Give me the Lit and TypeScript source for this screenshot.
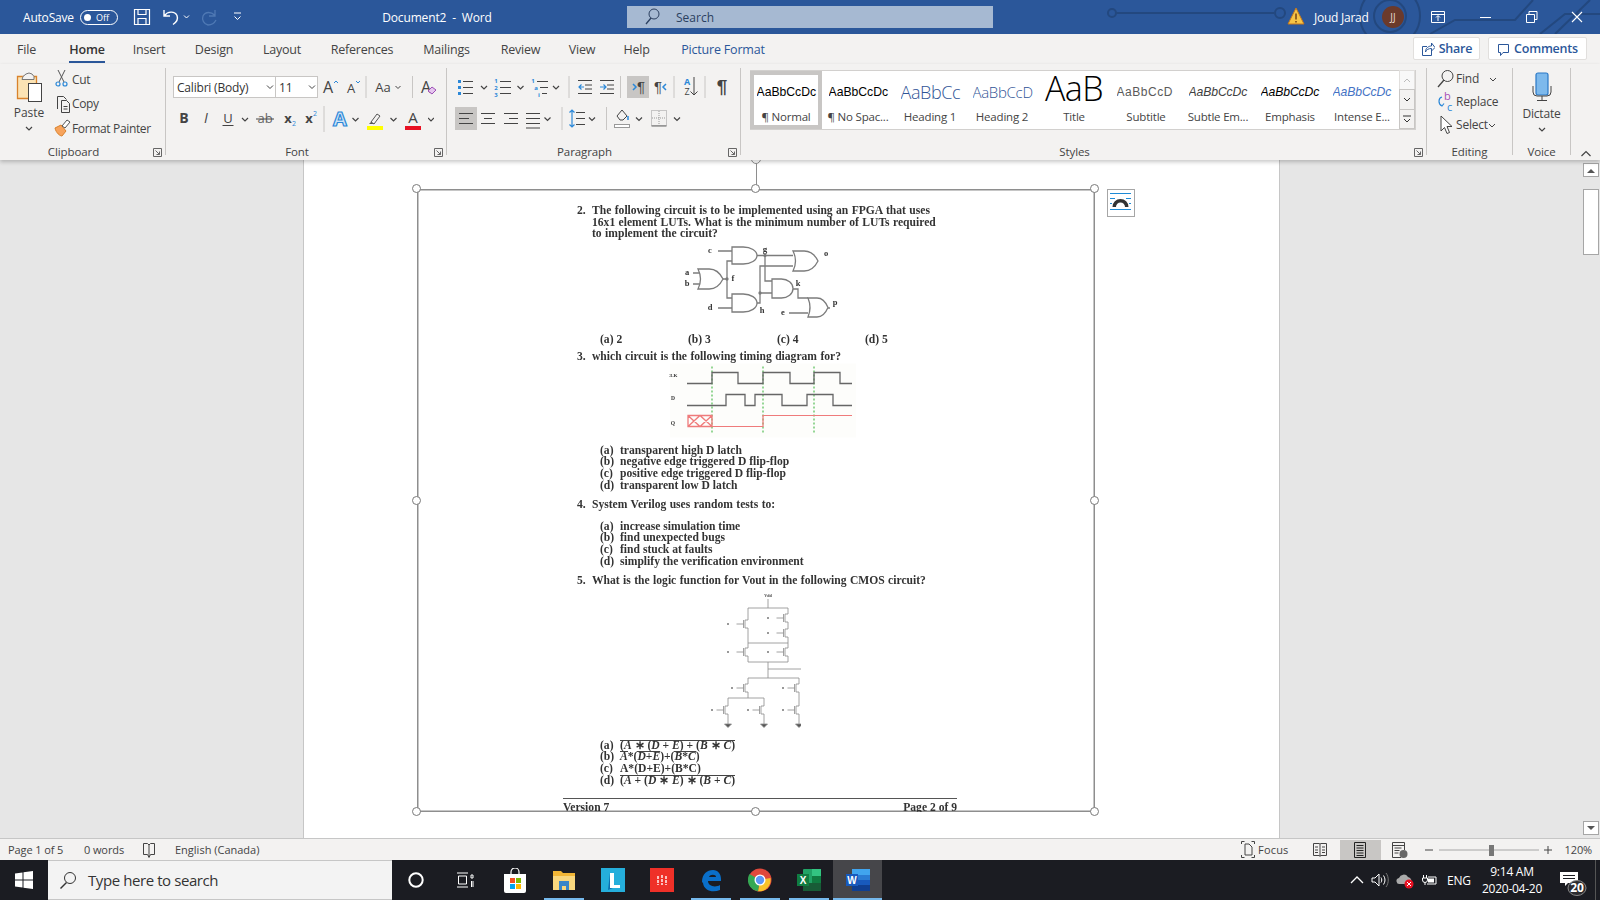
import { LitElement, html, svg, css } from "lit";
import { customElement } from "lit/decorators.js";

// icon cell: w wide, content drawn in its own coordinates
const ic = (w: number, inner: unknown = "", h = 22) =>
  html`<svg class="ic" width=${w} height=${h} viewBox="0 0 ${w} ${h}">${inner}</svg>`;
const gap = (w: number, h = 22) => ic(w, "", h);
const chev = (w: number, h = 22) =>
  ic(w, svg`<path d="M${w / 2 - 3} ${h / 2 - 1}l3 3 3-3" fill="none" stroke="#444" stroke-width="1.2"/>`, h);
const sep = (w: number, h = 22) =>
  ic(w, svg`<line x1=${w / 2} x2=${w / 2} y1="0" y2=${h} stroke="#c8c6c4"/>`, h);
const lines = (x1: number, x2: number, ys: number[], col = "#444") =>
  svg`${ys.map((y) => svg`<line x1=${x1} x2=${x2} y1=${y} y2=${y} stroke=${col} stroke-width="1"/>`)}`;
const hl = (w: number, h = 22) => svg`<rect width=${w} height=${h} fill="#c8c6c4"/>`;
const BLUE = "#2b88d8";

const launcher = html`<svg class="launch" width="9" height="9" viewBox="0 0 9 9"><path d="M.5 8.5V.5h8v8zM2.500 2.500l4 4M6.500 3.500v3h-3" fill="none" stroke="#666"/></svg>`;

const TABS: [string, string?][] = [["File"], ["Home", "on"], ["Insert"], ["Design"], ["Layout"], ["References"], ["Mailings"], ["Review"], ["View"], ["Help"], ["Picture Format", "pf"]];

const STYLES: [string, string, string][] = [
  ["AaBbCcDc", "¶ Normal", "s-normal sel"],
  ["AaBbCcDc", "¶ No Spac...", "s-normal"],
  ["AaBbCc", "Heading 1", "s-h1"],
  ["AaBbCcD", "Heading 2", "s-h2"],
  ["AaB", "Title", "s-title"],
  ["AaBbCcD", "Subtitle", "s-sub"],
  ["AaBbCcDc", "Subtle Em...", "s-em s-sem"],
  ["AaBbCcDc", "Emphasis", "s-em"],
  ["AaBbCcDc", "Intense E...", "s-em s-int"],
];

const HANDLES: [number, number][] = [[0, 0], [50, 0], [100, 0], [0, 50], [100, 50], [0, 100], [50, 100], [100, 100]];

const fet = (x: number, y: number, lx: number) => svg`
  <rect x=${x - 1} y=${y - 4} width="2" height="8" fill="#fff" stroke="none"/>
  <path d="M${x} ${y - 4}h-3v8h3M${x - 4.500} ${y - 4}v8M${x - 4.500} ${y}h-7"/>
  <circle cx=${lx} cy=${y} r="1" fill="#777" stroke="none"/>`;

const gnd = (x: number, y: number) => svg`<path d="M${x - 3.500} ${y}h7l-3.500 3.500z" fill="#555"/>`;
const lbl = (x: number, y: number, t: string, s = 6) =>
  svg`<text x=${x} y=${y} font-size=${s} text-anchor="middle" fill="#333" stroke="none" font-weight="700">${t}</text>`;

const andG = (x: number, y: number, w: number, h: number) =>
  svg`<path d="M${x} ${y}h${w * 0.45}a${w * 0.55} ${h / 2} 0 0 1 0 ${h}h-${w * 0.45}z" fill="#fff"/>`;
const orG = (x: number, y: number, w: number, h: number) =>
  svg`<path d="M${x} ${y}h${w * 0.45}q${w * 0.35} 0 ${w * 0.55} ${h / 2}q-${w * 0.2} ${h / 2} -${w * 0.55} ${h / 2}h-${w * 0.45}q${w * 0.2} -${h / 2} 0 -${h}z" fill="#fff"/>`;

@customElement("app-root")
export class AppRoot extends LitElement {
  static styles = css`
    :host { display: block; height: 900px; overflow: hidden; font-family: "Open Sans", "Noto Sans", sans-serif; font-size: 12px; color: #444; }
    .app { height: 900px; display: flex; flex-direction: column; background: #f3f2f1; }
    .ic { display: block; flex: none; }

    /* title bar */
    .title { height: 34px; flex: none; background: #2b579a; color: #fff; display: flex; align-items: center; position: relative; overflow: hidden; }
    .circuit { position: absolute; left: 1090px; top: 0; }
    .title > * { flex: none; }
    .as { margin-left: 23px; width: 57px; letter-spacing: -.2px; }
    .toggle { width: 38px; height: 15px; margin-right: 15px; border: 1.5px solid #fff; border-radius: 9px; box-sizing: border-box; display: flex; align-items: center; gap: 5px; padding-left: 3px; font-size: 9px; }
    .toggle i { width: 7px; height: 7px; background: #fff; border-radius: 50%; }
    .doc-name { margin-left: 0; width: 244px; text-align: center; letter-spacing: -.15px; }
    .search { width: 366px; height: 22px; background: #a6b9d2; color: #2b3f5f; display: flex; align-items: center; box-sizing: border-box; padding-left: 16px; gap: 15px; }
    .user { margin-left: auto; display: flex; align-items: center; position: relative; }
    .user .nm { margin: 0 10px 0 9px; letter-spacing: -.25px; width: 58px; white-space: nowrap; }
    .avatar { width: 22px; height: 22px; border-radius: 50%; background: #6b3a2b; font-size: 10px; display: grid; place-items: center; color: #e8d8d0; margin-right: 27px; }

    /* tabs */
    .tabs { height: 30px; flex: none; display: flex; position: relative; }
    .tabgrid { display: grid; grid-template-columns: 53px 68px 56px 74px 62px 98px 71px 77px 46px 63px 110px; font-size: 12.500px; letter-spacing: -.2px; }
    .tab { display: flex; justify-content: center; align-items: center; }
    .tab span { padding: 0 1px; height: 100%; display: flex; align-items: center; box-sizing: border-box; }
    .tab.on span { border-bottom: 2px solid #2b579a; border-top: 2px solid transparent; color: #333; font-weight: 600; height: 28px; padding: 0; }
    .tab.pf { color: #2b579a; }
    .actions { margin-left: auto; margin-right: 13px; display: flex; gap: 8px; padding-top: 3px; height: 23px; }
    .btn { background: #fff; border: 1px solid #e1dfdd; border-radius: 2px; color: #2b579a; display: flex; align-items: center; justify-content: center; gap: 4px; box-sizing: border-box; font-weight: 600; font-size: 12.500px; letter-spacing: -.2px; }
    .share { width: 67px; }
    .comments { width: 99px; }

    /* ribbon */
    .ribbon { height: 96px; flex: none; display: flex; position: relative; z-index: 3; box-shadow: 0 2px 4px rgba(0,0,0,.22); background: #f3f2f1; }
    .group { height: 87px; margin-top: 4px; flex: none; box-sizing: border-box; border-right: 1px solid #c8c6c4; display: flex; flex-direction: column; position: relative; }
    .gbody { flex: 1; min-height: 0; }
    .glabel { height: 16px; margin-bottom: -5px; text-align: center; line-height: 16px; font-size: 11.500px; letter-spacing: -.1px; color: #444; }
    .lp { padding-right: 18px; }
    .launch { position: absolute; right: 3px; bottom: -2px; }
    .g1 { width: 166px; }
    .g2 { width: 281px; }
    .g3 { width: 294px; }
    .g4 { width: 686px; }
    .g5 { width: 86px; }
    .g6 { width: 58px; }
    .g7 { flex: 1; display: flex; justify-content: center; align-items: flex-end; }
    .clip { display: flex; }
    .paste { width: 58px; display: flex; flex-direction: column; align-items: center; }
    .paste svg:first-child { margin-top: 3px; }
    .paste span { line-height: 14px; margin-top: 2px; }
    .clist { margin-left: -5px; padding-top: 0; }
    .crow { height: 24.500px; display: flex; align-items: center; white-space: nowrap; letter-spacing: -.35px; }
    .crow:first-child { margin-top: -1px; }
    .crow .ic { margin-right: 0; }

    .row { display: flex; align-items: center; }
    .f1 { margin: 8px 0 0 7px; height: 22px; }
    .f2 { margin: 8px 0 0 7px; height: 26px; }
    .fbox { height: 22px; box-sizing: border-box; background: #fff; border: 1px solid #c8c6c4; display: flex; align-items: center; justify-content: space-between; color: #333; padding: 0 1px 0 3px; letter-spacing: -.2px; }
    .fbox svg { flex: none; }
    .fname { width: 103px; }
    .fsize { width: 43px; margin-left: -1px; }

    .p1 { margin: 8px 0 0 8px; height: 22px; }
    .p2 { margin: 9px 0 0 8px; height: 23px; }

    .gallery { margin: 2px 0 0 9px; width: 666px; height: 60px; display: flex; background: #fff; border: 1px solid #d2d0ce; box-sizing: border-box; }
    .style { width: 72px; flex: none; box-sizing: border-box; display: flex; flex-direction: column; align-items: center; padding: 4px 5px 0; overflow: hidden; }
    .style.sel { border: 4px solid #c8c6c4; padding: 0 1px; margin-left: -1px; }
    .style b { height: 34px; width: 100%; margin-left: 3px; font-weight: 400; display: flex; align-items: center; justify-content: flex-start; overflow: hidden; white-space: nowrap; font-family: "Liberation Sans", sans-serif; font-size: 12.200px; color: #000; flex: none; }
    .style span { font-size: 11.500px; letter-spacing: -.2px; white-space: nowrap; line-height: 16px; }
    .s-h1 b { font-size: 18px; color: #2f5496; font-family: "Open Sans", sans-serif; font-weight: 300; letter-spacing: -.4px; }
    .s-h2 b { font-size: 15px; color: #2f5496; font-family: "Open Sans", sans-serif; font-weight: 300; letter-spacing: -.3px; }
    .s-title b { font-size: 34px; line-height: 34px; font-family: "Open Sans", sans-serif; font-weight: 300; justify-content: center; letter-spacing: -.5px; padding-bottom: 8px; box-sizing: border-box; margin-left: 0; }
    .s-sub b { color: #5a5a5a; letter-spacing: .55px; font-size: 12px; }
    .s-em b { font-style: italic; letter-spacing: -.1px; }
    .s-sem b { color: #404040; font-weight: 400; }
    .s-int b { color: #4472c4; }
    .gscroll { width: 16px; margin-left: auto; display: flex; flex-direction: column; flex: none; }
    .gscroll i { flex: 1; background: #f3f2f1; border: 1px solid #c8c6c4; display: grid; place-items: center; margin-top: -1px; }
    .gscroll i:first-child { border-color: #e1dfdd; background: #f8f8f8; }

    .edit .crow { height: 23px; letter-spacing: -.2px; }
    .edit .crow:first-child { margin-top: -1px; }
    .edit .crow span { width: 34px; }
    .voice { display: flex; flex-direction: column; align-items: center; padding-top: 2px; }
    .voice span { margin-top: 5px; line-height: 14px; letter-spacing: -.2px; }

    /* document */
    .doc { flex: 1; min-height: 0; display: flex; background: #e6e6e6; position: relative; }
    .canvas { flex: 1; min-width: 0; padding-left: 303px; overflow: hidden; }
    .page { width: 977px; height: 100%; box-sizing: border-box; background: #fff; border: solid #c6c6c6; border-width: 0 1px; padding: 29px 0 0 113px; }
    .pic { position: relative; width: 678px; height: 623px; box-sizing: border-box; box-shadow: inset 0 0 0 1.5px #8e8e8e; }
    .rot { position: absolute; left: 50%; top: -29px; width: 1px; height: 29px; background: #8e8e8e; }
    .rot::before { content: ""; position: absolute; left: -5px; top: -6px; width: 8px; height: 8px; border: 1.5px solid #8e8e8e; border-radius: 50%; background: #fff; }
    .h { position: absolute; width: 7px; height: 7px; margin: -5px 0 0 -5px; border: 1.5px solid #7a7a7a; background: #fff; border-radius: 50%; z-index: 2; }
    .layout { position: absolute; left: 690px; top: 0; width: 28px; height: 28px; box-sizing: border-box; border: 1.5px solid #a6a6a6; background: #fff; }
    .scan { height: 100%; overflow: hidden; box-sizing: border-box; padding: 16px 0 0 146px; font-family: "Liberation Serif", serif; font-size: 11.600px; line-height: 11.600px; color: #333; filter: blur(.5px); font-weight: 700; }
    .q { display: grid; grid-template-columns: 15px 1fr; white-space: nowrap; padding-left: 14px; }
    .l2 { word-spacing: .5px; }
    .dg { display: block; fill: none; stroke: #7c7c7c; stroke-width: 1.300; }
    .d1 { margin: 1px 0 0 107px; }
    .d2 { margin-left: 106px; }
    .d3 { margin-left: 138px; stroke: #8a8a8a; stroke-width: .8; }
    .opts4 { display: grid; grid-template-columns: 88px 89px 88px 40px; padding-left: 37px; height: 12px; }
    .m35 { margin-top: 5.500px; }
    .m8 { margin-top: 8px; }
    .m9 { margin-top: 8px; }
    .m10 { margin-top: 10px; }
    .opts { padding-left: 37px; display: grid; grid-template-columns: 20px 1fr; white-space: nowrap; }
    .ov { display: inline-block; border-top: 1px solid #444; line-height: 9.600px; padding-bottom: 1px; }
    .opts > .ov { justify-self: start; }
    .math i { font-style: italic; }
    .rule { width: 394px; margin-top: 12px; border-top: 1.5px solid #555; display: flex; justify-content: space-between; padding-top: 3px; }

    .vscroll { width: 16px; flex: none; margin-right: 1px; display: flex; flex-direction: column; position: relative; }
    .sbtn { height: 14px; background: #fff; border: 1px solid #a6a6a6; box-sizing: border-box; display: grid; place-items: center; flex: none; }
    .sup { margin-top: 3px; }
    .thumb { margin-top: 12px; height: 66px; background: #fff; border: 1px solid #a6a6a6; box-sizing: border-box; flex: none; }
    .sdown { margin-top: auto; margin-bottom: 3px; }

    /* status bar */
    .status { height: 22px; flex: none; box-sizing: border-box; border-top: 1px solid #c6c6c6; display: flex; align-items: center; font-size: 11px; color: #444; letter-spacing: -.1px; }
    .status .left { display: flex; align-items: center; }
    .s1 { margin-left: 8px; width: 76px; }
    .s2 { width: 58px; }
    .s3 { margin-left: 19px; letter-spacing: 0; }
    .sr { margin-left: auto; display: flex; align-items: center; height: 100%; }
    .sr .foc { width: 42px; letter-spacing: .2px; }
    .zoomv { width: 47px; text-align: left; padding-left: 11.500px; box-sizing: border-box; }

    /* taskbar */
    .task { height: 40px; flex: none; background: #1b1c22; display: flex; align-items: center; color: #fff; }
    .win { width: 48px; display: grid; place-items: center; height: 100%; flex: none; }
    .tsearch { width: 344px; height: 100%; box-sizing: border-box; background: #f3f3f3; border: 1px solid #c6c6c6; border-width: 1px 0; display: flex; align-items: center; color: #333; font-size: 15px; padding-left: 11px; gap: 11px; letter-spacing: -.42px; flex: none; }
    .tb0 { width: 48px; height: 100%; display: grid; place-items: center; flex: none; }
    .tb1 { width: 50px; }
    .tb { width: 49px; height: 100%; display: grid; place-items: center; flex: none; box-sizing: border-box; }
    .run { box-shadow: inset 0 -2px #76b9ed; width: 40px; margin: 0 4.500px; }
    .act { background: #46464a; box-shadow: inset 0 -2px #76b9ed; }
    .tray { margin-left: auto; display: flex; align-items: center; height: 100%; font-size: 12px; }
    .eng { width: 25px; text-align: left; letter-spacing: -.2px; white-space: nowrap; }
    .clock { width: 80px; text-align: center; line-height: 17px; font-size: 12px; letter-spacing: -.25px; }
    .note { width: 44px; height: 100%; display: flex; align-items: center; box-sizing: border-box; padding-left: 7px; border-right: 1px solid #555; margin-right: 4px; }
    .note svg { margin-top: 6px; }
  `;

  private titleBar() {
    const w = "#fff";
    return html`<div class="title">
      <svg class="circuit" width="510" height="34" viewBox="0 0 510 34" fill="none" stroke="#23487f" stroke-width="2">
        <circle cx="22" cy="13" r="4"/><path d="M26 13H184"/><circle cx="190" cy="13" r="5"/>
        <circle cx="300" cy="16" r="30"/><circle cx="300" cy="16" r="16"/>
        <path d="M340 34l25-14h60l18-20M500 0l-35 34M450 34l25-20h35"/>
      </svg>
      <span class="as">AutoSave</span>
      <span class="toggle"><i></i>Off</span>
      ${ic(18, svg`<path d="M1.500 3.500h15v15h-15zM5 3.500v5h8v-5M5 18.500v-6h8v6" fill="none" stroke=${w} stroke-width="1.200"/>`)}
      ${gap(10)}
      ${ic(22, svg`<path d="M3 4v6h6M3.500 9.500c3-4 10-5 12.500 0 1.500 4-1 7-4 9" fill="none" stroke=${w} stroke-width="1.400"/>`)}
      ${ic(8, svg`<path d="M1 9.500l2.500 2.500 2.500-2.500" fill="none" stroke=${w}/>`)}
      ${gap(8)}
      ${ic(22, svg`<path d="M16 4v6h-6M15.500 9c-3-3-9-4-11.500 1-1.500 4 1 8 5 9 3 0 6-1 8-5" fill="none" stroke="#4f79b4" stroke-width="1.300"/>`)}
      ${gap(12)}
      ${ic(10, svg`<path d="M1 7h7M1.500 10.500l3 3 3-3" fill="none" stroke=${w}/>`)}
      ${gap(72)}
      <span class="doc-name">Document2&nbsp; -&nbsp; Word</span>
      ${gap(68)}
      <span class="search">
        ${ic(18, svg`<circle cx="11" cy="8" r="5" fill="none" stroke="#2b3f5f"/><path d="M8 12l-5 6" stroke="#2b3f5f" stroke-width="1.300"/>`)}
        <span>Search</span>
      </span>
      <span class="user">
        ${ic(18, svg`<path d="M9 2l8 16H1z" fill="#f6c445" stroke="#c5761b"/><path d="M9 7.500v6M9 15v1.500" stroke="#6b3a10" stroke-width="1.400"/>`)}
        <span class="nm">Joud Jarad</span>
        <span class="avatar">JJ</span>
        ${ic(14, svg`<path d="M.5 5.500h13v11H.5zM.5 8.500h13M7 15v-5M5 11.500l2-2 2 2" fill="none" stroke=${w}/>`)}
        ${gap(33)}
        ${ic(14, svg`<path d="M2 11.500h11" stroke=${w}/>`)}
        ${gap(32)}
        ${ic(14, svg`<path d="M2.500 8.500h8v8h-8zM5 8.500v-3h8v8h-2.500" fill="none" stroke=${w}/>`)}
        ${gap(32)}
        ${ic(14, svg`<path d="M2 6l10 10M12 6L2 16" stroke=${w} stroke-width="1.100"/>`)}
        ${gap(16)}
      </span>
    </div>`;
  }

  private tabs() {
    const blue = "#2b579a";
    return html`<div class="tabs">
      <div class="tabgrid">
        ${TABS.map(([t, c]) => html`<div class="tab ${c ?? ""}"><span>${t}</span></div>`)}
      </div>
      <div class="actions">
        <div class="btn share">
          ${ic(14, svg`<path d="M6 8.500H1.500v9h9V13M4.500 14c0-4 3-6 6-6V5l3.500 4.500-3.500 3.500v-2.500c-3 0-5 1-6 3.500z" fill="none" stroke=${blue}/>`)}
          <span>Share</span>
        </div>
        <div class="btn comments">
          ${ic(13, svg`<path d="M1.500 6.500h10v8H6l-2.500 3v-3h-2z" fill="none" stroke=${blue}/>`)}
          <span>Comments</span>
        </div>
      </div>
    </div>`;
  }

  private clipboard() {
    return html`<div class="group g1"><div class="gbody clip">
      <div class="paste">
        <svg class="ic" width="30" height="33" viewBox="0 0 30 33">
          <path d="M3.500 5.500h19v22h-19z" fill="#fbe3b4" stroke="#d9822b" stroke-width="1.300"/>
          <path d="M9 5.500l3-2.500 3-1 3 1 2 2.500v3H8z" fill="#f3f2f1" stroke="#777"/>
          <rect x="14.500" y="12.500" width="13" height="18" fill="#fff" stroke="#444"/>
        </svg>
        <span>Paste</span>
        ${chev(12, 16)}
      </div>
      <div class="clist">
        <div class="crow">
          ${ic(19, svg`<path d="M5 2l6 12M12 2L6 14" stroke="#555" fill="none"/><circle cx="5" cy="16" r="2" fill="none" stroke=${BLUE} stroke-width="1.200"/><circle cx="12" cy="16" r="2" fill="none" stroke=${BLUE} stroke-width="1.200"/>`)}
          Cut
        </div>
        <div class="crow">
          ${ic(19, svg`<path d="M4.500 16V3.500h6l3 3M8.500 7.500h5l3 3v9h-8z" fill="none" stroke="#444"/><path d="M10.500 13.500h4M10.500 16h4" stroke="#444"/>`)}
          Copy
        </div>
        <div class="crow">
          ${ic(19, svg`<path d="M2 11l6-3 5 6-4 5c-2 0-6-3-7-8z" fill="#f7a35c" stroke="#d9822b"/><path d="M9 9l5-6 3 2-5 6z" fill="#fff" stroke="#555"/>`)}
          Format Painter
        </div>
      </div>
    </div><div class="glabel lp">Clipboard</div>${launcher}</div>`;
  }

  private font() {
    const t = (x: number, y: number, s: string, size: number) => svg`
      <text x=${x} y=${y} font-size=${size} text-anchor="middle" fill="#444">${s}</text>`;
    return html`<div class="group g2"><div class="gbody">
      <div class="row f1">
        <div class="fbox fname"><span>Calibri (Body)</span>${ic(8, svg`<path d="M1 9.500l3 3 3-3" fill="none" stroke="#444"/>`)}</div>
        <div class="fbox fsize"><span>11</span>${ic(8, svg`<path d="M1 9.500l3 3 3-3" fill="none" stroke="#444"/>`)}</div>
        ${ic(24, svg`${t(10, 17, "A", 16)}<path d="M16 7l2-2 2 2" fill="none" stroke=${BLUE}/>`)}
        ${ic(22, svg`${t(9, 17, "A", 13)}<path d="M14 5l2 2 2-2" fill="none" stroke=${BLUE}/>`)}
        ${sep(4)}
        ${ic(33, svg`${t(15, 16, "Aa", 13)}<path d="M27.500 10l2.500 2.500 2.500-2.500" fill="none" stroke="#444"/>`)}
        ${gap(11)}
        ${sep(1)}
        ${ic(25, svg`${t(13, 17, "A", 16)}<path d="M15 15l4-4 4 3-4 4z" fill="#e6c6ef" stroke="#9b4fb5"/>`)}
      </div>
      <div class="row f2">
        ${ic(22, svg`<text x="11" y="17" font-size="14" font-weight="700" text-anchor="middle" fill="#444">B</text>`, 26)}
        ${ic(22, svg`<text x="11" y="17" font-size="14" font-style="italic" text-anchor="middle" fill="#444">I</text>`, 26)}
        ${ic(21, svg`<text x="11" y="17" font-size="13" text-anchor="middle" fill="#444">U</text><path d="M5.500 19.500h11" stroke="#444"/>`, 26)}
        ${chev(14, 26)}
        ${ic(26, svg`<text x="13" y="17" font-size="13" text-anchor="middle" fill="#666">ab</text><path d="M4 13h18" stroke="#444"/>`, 26)}
        ${ic(22, svg`<text x="10" y="17" font-size="13" font-weight="700" text-anchor="middle" fill="#444">x</text><text x="16" y="20" font-size="7" text-anchor="middle" fill=${BLUE}>2</text>`, 26)}
        ${ic(20, svg`<text x="9" y="17" font-size="13" font-weight="700" text-anchor="middle" fill="#444">x</text><text x="15" y="10" font-size="7" text-anchor="middle" fill=${BLUE}>2</text>`, 26)}
        ${sep(8, 26)}
        ${ic(22, svg`<text x="12" y="20" font-size="20" font-weight="700" text-anchor="middle" fill="#cfe4f7" stroke=${BLUE} stroke-width="1.200">A</text>`, 26)}
        ${chev(11, 26)}
        ${ic(28, svg`<path d="M10 16l6-8 3 2-6 8z" fill="none" stroke="#555"/><path d="M8 18l2-2 3 2z" fill="#555"/><rect x="6" y="20" width="16" height="4" fill="#ffff00"/>`, 26)}
        ${chev(9, 26)}
        ${ic(30, svg`<text x="15" y="17" font-size="15" text-anchor="middle" fill="#444">A</text><rect x="7" y="20" width="16" height="4" fill="#e81123"/>`, 26)}
        ${chev(6, 26)}
      </div>
    </div><div class="glabel lp">Font</div>${launcher}</div>`;
  }

  private paragraph() {
    const L = [5.500, 11.500, 17.500];
    const A = (x: number, y: number, s: string, size = 6, col = BLUE, w = 700) =>
      svg`<text x=${x} y=${y} font-size=${size} font-weight=${w} text-anchor="middle" fill=${col}>${s}</text>`;
    const pil = (x: number, y: number, s = 15) => svg`<text x=${x} y=${y} font-size=${s} text-anchor="middle" fill="#444" font-family="Liberation Sans">¶</text>`;
    const R = [6.500, 11.500, 16.500, 20.500];
    return html`<div class="group g3"><div class="gbody">
      <div class="row p1">
        ${ic(22, svg`<rect x="3" y="4" width="3" height="3" fill=${BLUE}/><rect x="3" y="10" width="3" height="3" fill=${BLUE}/><rect x="3" y="16" width="3" height="3" fill=${BLUE}/>${lines(8, 18, L)}`)}
        ${chev(14)}
        ${ic(23, svg`${A(5, 7, "1")}${A(5, 14, "2")}${A(5, 21, "3")}${lines(9, 20, L)}`)}
        ${chev(13)}
        ${ic(25, svg`${A(6, 7, "1")}${A(9, 14, "a")}${A(12, 21, "i")}${lines(10, 21, [5.500])}${lines(13, 21, [11.500])}${lines(15, 20, [17.500])}`)}
        ${chev(8)}
        ${sep(18)}
        ${ic(14, svg`${lines(0, 14, [4.500, 17.500])}${lines(7, 14, [9, 13])}<path d="M6 11H1M3.500 8.500L1 11l2.500 2.500" fill="none" stroke=${BLUE} stroke-width="1.200"/>`)}
        ${gap(8)}
        ${ic(14, svg`${lines(0, 14, [4.500, 17.500])}${lines(7, 14, [9, 13])}<path d="M0 11h6M3.500 8.500L6 11l-2.500 2.500" fill="none" stroke=${BLUE} stroke-width="1.200"/>`)}
        ${sep(13)}
        ${ic(22, svg`${hl(22)}<path d="M6 8l3 3-3 3" fill="none" stroke=${BLUE} stroke-width="1.500"/>${pil(14, 16)}`)}
        ${gap(4)}
        ${ic(14, svg`${pil(5, 16)}<path d="M13 8l-3 3 3 3" fill="none" stroke=${BLUE} stroke-width="1.500"/>`)}
        ${sep(14)}
        ${ic(17, svg`${A(6, 9, "A", 9)}${A(6, 19, "Z", 9, "#444", 400)}<path d="M13 1v18M9.500 15.500L13 19l3.500-3.500" fill="none" stroke="#444"/>`)}
        ${sep(14)}
        ${ic(20, svg`<text x="10" y="17" font-size="19" font-weight="700" text-anchor="middle" fill="#444" font-family="Liberation Sans">¶</text>`)}
      </div>
      <div class="row p2">
        ${ic(22, svg`${hl(22, 23)}${lines(4, 18, [R[0]])}${lines(4, 14, [R[1]])}${lines(4, 18, [R[2]])}`, 23)}
        ${gap(4, 23)}
        ${ic(14, svg`${lines(0, 14, [R[0]])}${lines(3, 11, [R[1]])}${lines(0, 14, [R[2]])}`, 23)}
        ${gap(8, 23)}
        ${ic(15, svg`${lines(1, 15, [R[0]])}${lines(6, 15, [R[1]])}${lines(1, 15, [R[2]])}`, 23)}
        ${gap(7, 23)}
        ${ic(15, svg`${lines(1, 15, [R[0], R[1], R[2], 21])}`, 23)}
        ${chev(15, 23)}
        ${sep(14, 23)}
        ${ic(16, svg`<path d="M3 3v17M.5 5.500L3 3l2.500 2.500M.5 17.500L3 20l2.500-2.500" fill="none" stroke=${BLUE} stroke-width="1.200"/>${lines(7, 16, [5.500, 11.500, 17.500])}`, 23)}
        ${chev(14, 23)}
        ${sep(15, 23)}
        ${ic(16, svg`<path d="M3 9l5-6 5 6-4 4H6z" fill="none" stroke="#444"/><path d="M14 9v4" stroke=${BLUE} stroke-width="1.500"/><rect x=".5" y="17.500" width="15" height="3" fill="#fff" stroke="#999"/>`, 23)}
        ${chev(18, 23)}
        ${gap(3, 23)}
        ${ic(16, svg`<rect x=".5" y="3.500" width="15" height="15" fill="none" stroke="#999" stroke-dasharray="1 1"/><path d="M8 4v14M1 11h14" stroke="#999" stroke-dasharray="1 1"/><path d="M.5 19h15" stroke="#666"/>`, 23)}
        ${chev(20, 23)}
      </div>
    </div><div class="glabel lp">Paragraph</div>${launcher}</div>`;
  }

  private styles_() {
    return html`<div class="group g4"><div class="gbody">
      <div class="gallery">
        ${STYLES.map(([p, n, c]) => html`<div class="style ${c}"><b>${p}</b><span>${n}</span></div>`)}
        <div class="gscroll">
          <i><svg width="8" height="5" viewBox="0 0 8 5"><path d="M1 4l3-3 3 3" fill="none" stroke="#bbb"/></svg></i>
          <i><svg width="8" height="5" viewBox="0 0 8 5"><path d="M1 1l3 3 3-3" fill="none" stroke="#333"/></svg></i>
          <i><svg width="8" height="8" viewBox="0 0 8 8"><path d="M0 1h8M1 4l3 3 3-3" fill="none" stroke="#333"/></svg></i>
        </div>
      </div>
    </div><div class="glabel lp">Styles</div>${launcher}</div>`;
  }

  private editing() {
    const c = (x: number) => svg`<path d="M${x} 10l3 3 3-3" fill="none" stroke="#444"/>`;
    return html`<div class="group g5"><div class="gbody edit">
      <div class="crow">
        ${gap(10)}
        ${ic(19, svg`<circle cx="10.500" cy="8" r="5.500" fill="none" stroke="#444"/><path d="M7 12l-6 7" stroke="#444" stroke-width="1.300"/>`)}
        <span>Find</span>${ic(10, c(0))}
      </div>
      <div class="crow">
        ${gap(10)}
        ${ic(19, svg`<text x="7" y="9" font-size="11" fill="#a64db5">b</text><text x="10" y="20" font-size="11" fill=${BLUE}>c</text><path d="M5 6c-4 1-4 7 0 9M2.500 13l2.500 2 2-2.500" fill="none" stroke=${BLUE} stroke-width="1.200"/>`)}
        Replace
      </div>
      <div class="crow">
        ${gap(10)}
        ${ic(19, svg`<path d="M4 2v15l3.500-3.500 2.500 6 2.500-1-2.500-6H15z" fill="#fff" stroke="#444"/>`)}
        Select${ic(10, c(1))}
      </div>
    </div><div class="glabel">Editing</div></div>`;
  }

  private voice() {
    return html`<div class="group g6"><div class="gbody voice">
      <svg class="ic" width="24" height="32" viewBox="0 0 24 32">
        <rect x="6" y="3" width="12" height="22" rx="2" fill="#7db9ec" stroke="#2a78c6" stroke-width="1.200"/>
        <path d="M3 16v6a4 4 0 0 0 4 4h10a4 4 0 0 0 4-4v-6M12 26v4M7 30.500h10" fill="none" stroke="#444"/>
      </svg>
      <span>Dictate</span>
      ${chev(12, 16)}
    </div><div class="glabel">Voice</div></div>`;
  }

  private circuit() {
    return html`<svg class="dg d1" width="180" height="93" viewBox="670 240 180 93">
      <path d="M718 250h14M732 260h-5V297h5M700 272h-7M700 283h-7M723 278h4M718 307h14M757 254.500h36M757 302h3V265h33M765 253v27h7M760 292h12M793 288h5v9h10M789 312h19M828 307h2"/>
      ${andG(732, 246, 25, 17)}${andG(732, 293, 25, 18)}${andG(772, 278, 21, 19)}
      ${orG(698, 268, 25, 20)}${orG(793, 250, 25, 20)}${orG(808, 297, 20, 19)}
      <circle cx="765" cy="254.500" r="1" fill="#555"/><circle cx="727" cy="278" r="1" fill="#555"/><circle cx="760" cy="292" r="1" fill="#555"/>
      ${lbl(710, 252, "c", 8.500)}${lbl(687, 274, "a", 8.500)}${lbl(687, 285, "b", 8.500)}${lbl(733, 280, "f", 8.500)}${lbl(765, 251, "g", 9)}${lbl(826, 255, "o", 8.500)}${lbl(798, 285, "k", 8.500)}${lbl(710, 309, "d", 8.500)}${lbl(762, 312, "h", 8.500)}${lbl(783, 314, "e", 8.500)}${lbl(835, 304, "p", 8.500)}
    </svg>`;
  }

  private timing() {
    return html`<svg class="dg d2" width="187" height="82" viewBox="669 362.500 187 82">
      <rect x="670" y="363" width="186" height="74" fill="#fdfdfb" stroke="none"/>
      <path d="M712 366v67M763 366v67M814 366v67" stroke="#5fc35f" stroke-dasharray="2 2"/>
      <path d="M687 383h25v-11h26v11h25v-11h27v11h24v-11h26v11h12" stroke="#666" stroke-width="1.300"/>
      <path d="M687 405h39v-11h19v11h10v-11h27v11h25v-11h26v11h19" stroke="#666" stroke-width="1.300"/>
      <path d="M688 415h24v11h-24zM688 415l12 11 12-11M688 426l12-11 12 11" stroke="#ef7b7b"/>
      <path d="M712 426h51v-11h89" stroke="#ef7b7b" stroke-width="1.200"/>
      ${lbl(672, 376, "CLK", 5)}${lbl(673, 399, "D", 5.500)}${lbl(673, 424, "Q", 5.500)}
    </svg>`;
  }

  private cmos() {
    return html`<svg class="dg d3" width="100" height="153" viewBox="701 586 100 153">
      <path d="M768 598v9M748 607h40M748 607v54M788 607v54M748 642h40M748 661h40M768 661v16M768 668h37M748 677h51M748 677v20M728 697h36M728 697v26M764 697v26M799 677v46"/>
      ${fet(748, 623, 728)}${fet(788, 617, 768)}${fet(788, 632, 768)}${fet(748, 651, 728)}${fet(788, 651, 768)}
      ${fet(748, 687, 732)}${fet(728, 709, 712)}${fet(764, 709, 748)}${fet(799, 687, 783)}${fet(799, 709, 783)}
      ${gnd(728, 723)}${gnd(764, 723)}${gnd(799, 723)}
      ${lbl(768, 596, "Vdd", 4)}${lbl(810, 670, "Vout", 4)}
    </svg>`;
  }

  private paper() {
    return html`<div class="scan">
      <div class="q"><span>2.</span><span class="l2">The following circuit is to be implemented using an FPGA that uses<br/>16x1 element LUTs. What is the minimum number of LUTs required<br/>to implement the circuit?</span></div>
      ${this.circuit()}
      <div class="opts4"><span>(a) 2</span><span>(b) 3</span><span>(c) 4</span><span>(d) 5</span></div>
      <div class="q m35"><span>3.</span><span class="l2">which circuit is the following timing diagram for?</span></div>
      ${this.timing()}
      <div class="opts"><span>(a)</span><span>transparent high D latch</span><span>(b)</span><span>negative edge triggered D flip-flop</span><span>(c)</span><span>positive edge triggered D flip-flop</span><span>(d)</span><span>transparent low D latch</span></div>
      <div class="q m8"><span>4.</span><span class="l2">System Verilog uses random tests to:</span></div>
      <div class="opts m10"><span>(a)</span><span>increase simulation time</span><span>(b)</span><span>find unexpected bugs</span><span>(c)</span><span>find stuck at faults</span><span>(d)</span><span>simplify the verification environment</span></div>
      <div class="q m9"><span>5.</span><span class="l2">What is the logic function for Vout in the following CMOS circuit?</span></div>
      ${this.cmos()}
      <div class="opts math">
        <span>(a)</span><span class="ov">(<i>A</i> ∗ (<i>D</i> + <i>E</i>) + (<i>B</i> ∗ <i>C</i>)</span>
        <span>(b)</span><span><span class="ov"><i>A</i></span>*(<span class="ov"><i>D</i>+<i>E</i></span>)+(<span class="ov"><i>B</i>*<i>C</i></span>)</span>
        <span>(c)</span><span>A*(D+E)+(B*C)</span>
        <span>(d)</span><span class="ov">(<i>A</i> + (<i>D</i> ∗ <i>E</i>) ∗ (<i>B</i> + <i>C</i>)</span>
      </div>
      <div class="rule"><span>Version 7</span><span>Page 2 of 9</span></div>
    </div>`;
  }

  private document_() {
    return html`<div class="doc">
      <div class="canvas"><div class="page">
        <div class="pic">
          <div class="rot"></div>
          ${HANDLES.map(([x, y]) => html`<span class="h" style="left:${x}%;top:${y}%"></span>`)}
          <div class="layout">
            <svg width="25" height="25" viewBox="0 0 25 25" fill="none">
              <path d="M2 3.500h21M2 8.500h5M18 8.500h5M2 13.500h2M21 13.500h2M2 19.500h21" stroke="#1d8ad6"/>
              <path d="M4.500 17a8 8 0 0 1 16 0h-3.500a4.500 4.500 0 0 0-9 0z" fill="#333"/>
            </svg>
          </div>
          ${this.paper()}
        </div>
      </div></div>
      <div class="vscroll">
        <div class="sbtn sup"><svg width="8" height="5" viewBox="0 0 8 5"><path d="M0 5l4-4 4 4z" fill="#555"/></svg></div>
        <div class="thumb"></div>
        <div class="sbtn sdown"><svg width="8" height="5" viewBox="0 0 8 5"><path d="M0 0l4 4 4-4z" fill="#555"/></svg></div>
      </div>
    </div>`;
  }

  private statusBar() {
    return html`<div class="status">
      <div class="left">
        <span class="s1">Page 1 of 5</span>
        <span class="s2">0 words</span>
        ${ic(14, svg`<path d="M1.500 3.500h4l1.500 1.500 1.500-1.500h4v11h-4l-1.500 3-1.500-3h-4zM7 5v11" fill="none" stroke="#444"/>`, 20)}
        <span class="s3">English (Canada)</span>
      </div>
      <div class="sr">
        ${ic(14, svg`<path d="M.5 4V1.500h3M10.500 1.500h3V4M13.500 15v2.500h-3M3.500 17.500h-3V15M4 15V4h4l3 3v8z" fill="none" stroke="#444"/>`, 20)}
        ${gap(3, 20)}
        <span class="foc">Focus</span>
        ${gap(13, 20)}
        ${ic(14, svg`<path d="M.5 3.500h6l.5 1 .5-1h6v12h-6l-.5 1-.5-1h-6zM7 4.500v11M2 7h3M2 10h3M2 12.500h3M9 7h3M9 10h3M9 12.500h3" fill="none" stroke="#444"/>`, 20)}
        ${gap(13, 20)}
        ${ic(41, svg`<rect width="41" height="20" fill="#c8c6c4"/><path d="M14.500 2.500h11v15h-11zM16.500 5.500h7M16.500 8h7M16.500 10.500h7M16.500 13h7M16.500 15.500h7" fill="none" stroke="#222"/>`, 20)}
        ${gap(11, 20)}
        ${ic(16, svg`<path d="M.5 2.500h12V10M9 17.500H.5v-15M.5 5.500h12M2.500 8h7M2.500 10.500h5M2.500 13h4" fill="none" stroke="#444"/><circle cx="11.500" cy="14" r="4" fill="#666"/>`, 20)}
        ${gap(16, 20)}
        ${ic(10, svg`<path d="M1 10h8" stroke="#444"/>`, 20)}
        ${gap(5, 20)}
        ${ic(100, svg`<path d="M0 10h100" stroke="#a6a6a6"/><rect x="50" y="5" width="5" height="11" fill="#777"/>`, 20)}
        ${gap(4, 20)}
        ${ic(10, svg`<path d="M1 10h8M5 6v8" stroke="#444"/>`, 20)}
        <span class="zoomv">120%</span>
      </div>
    </div>`;
  }

  private taskbar() {
    return html`<div class="task">
      <div class="win">
        <svg width="18" height="18" viewBox="0 0 18 18" fill="#fff"><path d="M0 2.500l7.500-1v7H0zM8.500 1.300L18 0v8.500H8.500zM0 9.500h7.500v7l-7.500-1zM8.500 9.500H18V18l-9.500-1.300z"/></svg>
      </div>
      <div class="tsearch">
        <svg width="18" height="18" viewBox="0 0 18 18" fill="none" stroke="#333"><circle cx="11" cy="7" r="5.500"/><path d="M7.500 11.500l-6 6" stroke-width="1.400"/></svg>
        <span>Type here to search</span>
      </div>
      <div class="tb0">
        <svg width="18" height="18" viewBox="0 0 18 18"><circle cx="9" cy="9" r="6.700" fill="none" stroke="#fff" stroke-width="2"/></svg>
      </div>
      <div class="tb0 tb1">
        <svg width="18" height="16" viewBox="0 0 18 16" fill="none" stroke="#fff"><path d="M1 1h11M1 15h11M2.500 4h8v8h-8zM15 3h2v3h-2zM15.500 9v6M17 9v6"/></svg>
      </div>
      <div class="tb">
        <svg width="24" height="25" viewBox="0 0 24 25">
          <path d="M8 7V4a4 4 0 0 1 8 0v3" fill="none" stroke="#fff" stroke-width="1.200"/>
          <path d="M1 6h22v17a2 2 0 0 1-2 2H3a2 2 0 0 1-2-2z" fill="#fff"/>
          <rect x="7" y="10" width="5" height="5" fill="#f25022"/><rect x="13" y="10" width="5" height="5" fill="#7fba00"/>
          <rect x="7" y="16" width="5" height="5" fill="#00a4ef"/><rect x="13" y="16" width="5" height="5" fill="#ffb900"/>
        </svg>
      </div>
      <div class="tb run">
        <svg width="22" height="20" viewBox="0 0 22 20">
          <path d="M0 1h8l2 2h12v17H0z" fill="#f2b636"/><path d="M0 6h22v14H0z" fill="#f9d77e"/>
          <path d="M6 11h10v9h-3v-4H9v4H6z" fill="#3a86c8"/>
        </svg>
      </div>
      <div class="tb">
        <svg width="24" height="24" viewBox="0 0 24 24">
          <rect width="24" height="24" fill="#25aedb"/>
          <path d="M9 5h4v12h6v3H9z" fill="#fff"/><path d="M9 5v15h3L7 22z" fill="#0c6fb0"/>
        </svg>
      </div>
      <div class="tb">
        <svg width="24" height="24" viewBox="0 0 24 24">
          <rect width="24" height="24" fill="#ef3028"/>
          <path d="M8 8v9M12 7v10M16 8v9" stroke="#fff" stroke-width="1.400" stroke-dasharray="3 1"/>
        </svg>
      </div>
      <div class="tb run">
        <svg width="22" height="24" viewBox="0 0 22 24" fill="none">
          <path d="M2 14C2 6 7 2 13 2c5 0 8 4 8 9v2H8c0 5 7 7 12 4v5c-7 3-16 1-17-7" fill="#0a6fc9"/>
          <path d="M9 9h7c0-3-6-3-7 0z" fill="#1b1c22"/>
        </svg>
      </div>
      <div class="tb run">
        <svg width="24" height="24" viewBox="0 0 24 24">
          <circle cx="12" cy="12" r="11.500" fill="#e0483b"/>
          <path d="M12 12L22.500 10A11.500 11.500 0 0 1 10 23.300z" fill="#f9c32b"/>
          <path d="M12 12L10 23.300A11.500 11.500 0 0 1 1.500 6z" fill="#34a853"/>
          <circle cx="12" cy="12" r="5.500" fill="#fff"/><circle cx="12" cy="12" r="4.200" fill="#5e97f6"/>
        </svg>
      </div>
      <div class="tb run">
        <svg width="24" height="22" viewBox="0 0 24 22">
          <rect x="6" width="18" height="22" rx="1" fill="#21a366"/><rect x="15" y="0" width="9" height="7" fill="#33c481"/>
          <rect x="6" y="14" width="18" height="8" fill="#185c37"/><rect x="15" y="7" width="9" height="7" fill="#107c41"/>
          <rect y="5" width="12" height="12" fill="#107c41"/>
          <text x="6" y="15" font-size="10" font-weight="700" fill="#fff" text-anchor="middle" font-family="Liberation Sans">X</text>
        </svg>
      </div>
      <div class="tb act">
        <svg width="24" height="22" viewBox="0 0 24 22">
          <rect x="6" width="18" height="22" rx="1" fill="#2b7cd3"/><rect x="6" width="18" height="6" fill="#41a5ee"/>
          <rect x="6" y="11" width="18" height="5" fill="#185abd"/><rect x="6" y="16" width="18" height="6" fill="#103f91"/>
          <rect y="5" width="12" height="12" fill="#185abd"/>
          <text x="6" y="15" font-size="10" font-weight="700" fill="#fff" text-anchor="middle" font-family="Liberation Sans">W</text>
        </svg>
      </div>
      <div class="tray">
        ${ic(14, svg`<path d="M1 13l6-6 6 6" fill="none" stroke="#fff" stroke-width="1.300"/>`, 20)}
        ${gap(7, 20)}
        ${ic(18, svg`<path d="M1 8h3l4-4v12l-4-4H1z" fill="none" stroke="#fff"/><path d="M10 7.500c1 1.500 1 3.500 0 5M12.500 5.500c2 3 2 6 0 9" fill="none" stroke="#fff"/><path d="M15 3c3 4 3 10 0 14" fill="none" stroke="#777"/>`, 20)}
        ${gap(7, 20)}
        ${ic(18, svg`<path d="M4 14a3 3 0 0 1-1-6 5 5 0 0 1 9-1 4 4 0 0 1 2 7z" fill="#aaa"/><circle cx="13" cy="14" r="4.500" fill="#e81123"/><path d="M11 12l4 4M15 12l-4 4" stroke="#fff"/>`, 20)}
        ${gap(6, 20)}
        ${ic(17, svg`<path d="M3.500 5v3M6.500 5v3M2.500 8h5v2a2.500 2.500 0 0 1-5 0zM5 12.500V15" fill="none" stroke="#fff"/><path d="M8 7h8v7H7" fill="none" stroke="#fff"/><rect x="8" y="8.500" width="6" height="4" fill="#fff"/>`, 20)}
        ${gap(10, 20)}
        <span class="eng">ENG</span>
        <span class="clock">9:14 AM<br/>2020-04-20</span>
        <span class="note">
          <svg width="28" height="30" viewBox="0 0 28 30" fill="none">
            <path d="M1 4h18v11H9l-3 3v-3H1z" fill="#fff"/><path d="M4 7.500h12M4 10.500h12" stroke="#1b1c22"/>
            <ellipse cx="18" cy="20" rx="9" ry="7.500" fill="#2b2b2f" stroke="#888"/>
            <text x="18" y="24" font-size="12" font-weight="700" fill="#fff" text-anchor="middle" font-family="Open Sans">20</text>
          </svg>
        </span>
      </div>
    </div>`;
  }

  render() {
    return html`<div class="app">
      ${this.titleBar()}
      ${this.tabs()}
      <div class="ribbon">
        ${this.clipboard()}${this.font()}${this.paragraph()}${this.styles_()}${this.editing()}${this.voice()}
        <div class="g7">
          <svg width="12" height="12" viewBox="0 0 12 12"><path d="M1.500 8l4.500-4.500L10.500 8" fill="none" stroke="#444" stroke-width="1.200"/></svg>
        </div>
      </div>
      ${this.document_()}
      ${this.statusBar()}
      ${this.taskbar()}
    </div>`;
  }
}
